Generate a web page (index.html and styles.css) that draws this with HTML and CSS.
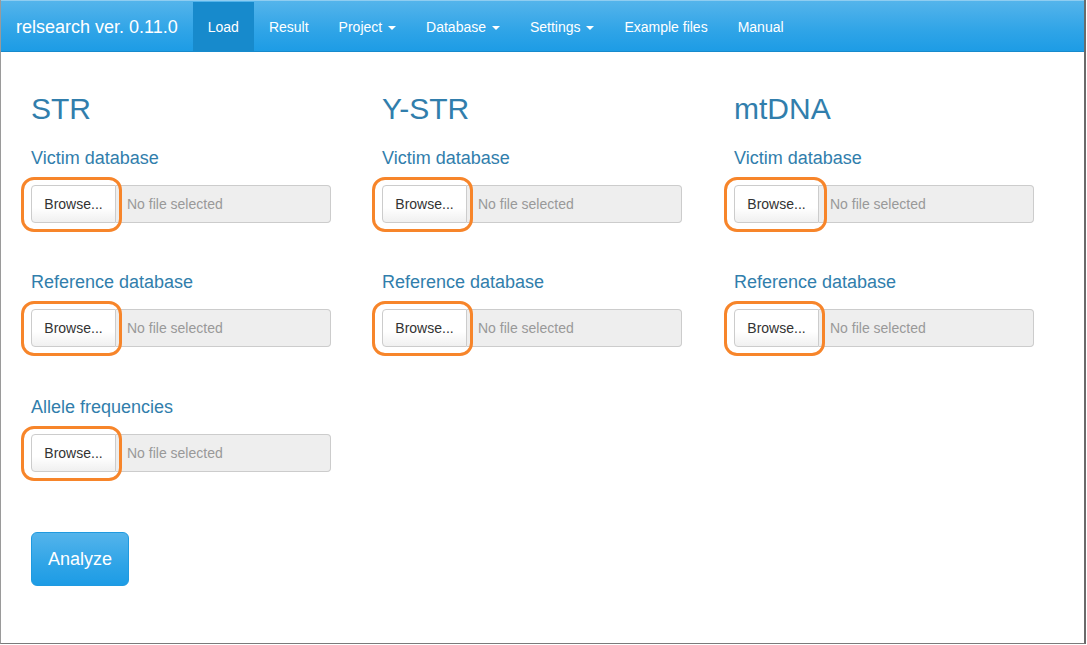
FILE: index.html
```html
<!DOCTYPE html>
<html>
<head>
<meta charset="utf-8">
<title>relsearch</title>
<link rel="stylesheet" href="styles.css">
</head>
<body>
<div class="frame">
  <nav class="navbar">
    <span class="brand">relsearch ver. 0.11.0</span>
    <ul class="nav">
      <li class="active">Load</li>
      <li>Result</li>
      <li>Project <span class="caret"></span></li>
      <li>Database <span class="caret"></span></li>
      <li>Settings <span class="caret"></span></li>
      <li>Example files</li>
      <li>Manual</li>
    </ul>
  </nav>
  <main class="content">
    <section class="col">
      <h2 class="title">STR</h2>
      <div class="group">
        <label class="label">Victim database</label>
        <div class="file"><span class="browse">Browse...</span><span class="field">No file selected</span><span class="mark"></span></div>
      </div>
      <div class="group">
        <label class="label">Reference database</label>
        <div class="file"><span class="browse">Browse...</span><span class="field">No file selected</span><span class="mark"></span></div>
      </div>
      <div class="group last">
        <label class="label">Allele frequencies</label>
        <div class="file"><span class="browse">Browse...</span><span class="field">No file selected</span><span class="mark"></span></div>
      </div>
      <button class="analyze">Analyze</button>
    </section>
    <section class="col">
      <h2 class="title">Y-STR</h2>
      <div class="group">
        <label class="label">Victim database</label>
        <div class="file"><span class="browse">Browse...</span><span class="field">No file selected</span><span class="mark"></span></div>
      </div>
      <div class="group">
        <label class="label">Reference database</label>
        <div class="file"><span class="browse">Browse...</span><span class="field">No file selected</span><span class="mark"></span></div>
      </div>
    </section>
    <section class="col">
      <h2 class="title">mtDNA</h2>
      <div class="group">
        <label class="label">Victim database</label>
        <div class="file"><span class="browse">Browse...</span><span class="field">No file selected</span><span class="mark wide"></span></div>
      </div>
      <div class="group">
        <label class="label">Reference database</label>
        <div class="file"><span class="browse">Browse...</span><span class="field">No file selected</span><span class="mark"></span></div>
      </div>
    </section>
  </main>
</div>
</body>
</html>
```

FILE: styles.css
```css
* { box-sizing: border-box; }
html, body { margin: 0; padding: 0; background: #fff; }
body {
  font-family: "Liberation Sans", Arial, Helvetica, sans-serif;
  font-size: 14px;
  color: #555;
}
.frame {
  width: 1086px;
  height: 644px;
  border-left: 1px solid #9a9a9a;
  border-right: 2px solid #6a6a6a;
  border-bottom: 1px solid #7a7a7a;
  overflow: hidden;
}
.navbar {
  display: flex;
  align-items: stretch;
  height: 52px;
  padding-top: 1px;
  background: linear-gradient(#54b4eb, #2fa4e7 60%, #1d9ce5);
  border-top: 1px solid #8fcdf1;
  border-bottom: 1px solid #178acc;
}
.brand {
  padding: 1px 15px 0;
  font-size: 18px;
  line-height: 48px;
  color: #fff;
}
.nav {
  display: flex;
  list-style: none;
  margin: 0;
  padding: 0;
}
.nav li {
  padding: 1px 15px 0;
  line-height: 48px;
  color: #fff;
  font-size: 14px;
}
.nav li.active { background: #178acc; }
.caret {
  display: inline-block;
  width: 0;
  height: 0;
  margin-left: 2px;
  vertical-align: middle;
  border-top: 4px solid #fff;
  border-left: 4px solid transparent;
  border-right: 4px solid transparent;
}
.content {
  display: grid;
  grid-template-columns: repeat(3, 1fr);
  padding: 40px 15px 0;
}
.col {
  padding: 0 15px;
  display: flex;
  flex-direction: column;
  align-items: flex-start;
}
.col:last-child { padding-left: 16px; }
.title {
  margin: 0 0 23px;
  font-size: 30px;
  line-height: 33px;
  font-weight: 400;
  color: #317eac;
}
.group { margin-bottom: 49px; }
.group.last { margin-top: 1px; margin-bottom: 60px; }
.label {
  display: block;
  font-size: 18px;
  line-height: 20px;
  color: #317eac;
  margin-bottom: 17px;
}
.file {
  position: relative;
  display: flex;
  width: 300px;
  height: 38px;
}
.browse {
  width: 85px;
  flex: none;
  display: flex;
  align-items: center;
  justify-content: center;
  color: #333;
  background: linear-gradient(#fff, #fff 60%, #f0f0f0);
  border: 1px solid #ccc;
  border-radius: 4px 0 0 4px;
}
.field {
  flex: 1;
  display: flex;
  align-items: center;
  padding-left: 11px;
  color: #999;
  background: #eee;
  border: 1px solid #ccc;
  border-left: none;
  border-radius: 0 4px 4px 0;
}
.mark {
  position: absolute;
  left: -10px;
  top: -8px;
  width: 101px;
  height: 55px;
  border: 3.5px solid #f7852a;
  border-radius: 13px;
  pointer-events: none;
}
.mark.wide { width: 103px; }
.analyze {
  font-family: inherit;
  font-size: 18px;
  line-height: 24px;
  padding: 14px 16px;
  color: #fff;
  background: linear-gradient(#54b4eb, #2fa4e7 60%, #1d9ce5);
  border: 1px solid #1f9ae0;
  border-radius: 6px;
  cursor: pointer;
}
```
